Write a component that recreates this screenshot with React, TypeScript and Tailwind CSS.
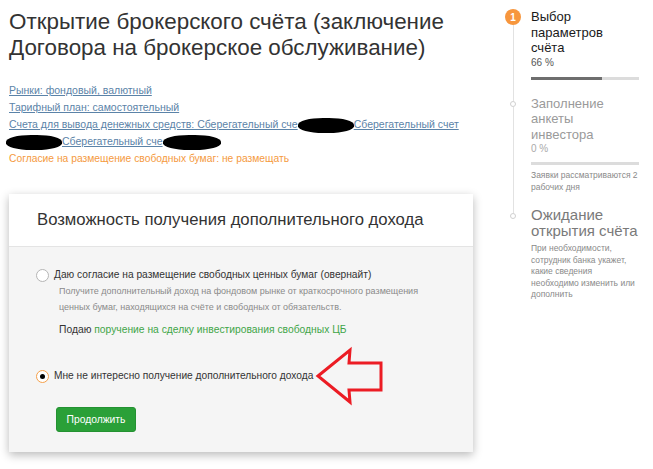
import type { ReactNode } from 'react';

function Blob({ w }: { w: number }) {
  return (
    <span
      className="inline-block align-middle h-[15px] rounded-[45%] bg-black"
      style={{ width: w }}
    />
  );
}

function Step({
  marker,
  children,
  lineAbove,
  last,
}: {
  marker: ReactNode;
  children: ReactNode;
  lineAbove: number;
  last?: boolean;
}) {
  return (
    <div className="flex">
      <div className="w-[34px] shrink-0 pl-[8px]">
        <div className="w-[16px] h-full flex flex-col items-center">
          {lineAbove > 0 && <div className="w-px bg-[#e2e2e2]" style={{ height: lineAbove }} />}
          {marker}
          {!last && <div className="w-px flex-1 bg-[#e2e2e2]" />}
        </div>
      </div>
      <div className="flex-1 pr-[14px]">{children}</div>
    </div>
  );
}

function SmallDot() {
  return <div className="w-[6px] h-[6px] rounded-full border border-[#d0d0d0] bg-white shrink-0" />;
}

export default function App() {
  return (
    <main className="relative w-[653px] h-[469px] bg-white overflow-hidden font-['Liberation_Sans',Arial,sans-serif] flex">
      <section className="w-[497px] shrink-0 pl-[9px] pt-[9px]">
        <h1 className="text-[22.4px] leading-[26px] text-[#333]">
          Открытие брокерского счёта (заключение Договора на брокерское обслуживание)
        </h1>

        <div className="mt-[21px] text-[10.5px] leading-[17px]">
          <div>
            <a className="text-[#5b83a8] underline">Рынки: фондовый, валютный</a>
          </div>
          <div>
            <a className="text-[#5b83a8] underline">Тарифный план: самостоятельный</a>
          </div>
          <div className="text-[#5b83a8] underline">
            Счета для вывода денежных средств: Сберегательный сче<Blob w={56} />Сберегательный счет
          </div>
          <div className="text-[#5b83a8] underline -ml-[3px]">
            <Blob w={56} />Сберегательный сче<Blob w={58} />
          </div>
          <div className="text-[#f59a3e] text-[10.3px]">Согласие на размещение свободных бумаг: не размещать</div>
        </div>

        <div className="mt-[27px] w-[464px] shadow-[0_3px_9px_rgba(0,0,0,0.28)]">
          <div className="bg-white h-[53px] px-[28px] flex items-center border-b border-[#e4e4e4]">
            <h2 className="text-[16.7px] text-[#333]">Возможность получения дополнительного дохода</h2>
          </div>
          <div className="bg-[#f5f5f5] pt-[20px] pb-[20px] pl-[27px]">
            <label className="flex items-center gap-[5px] text-[10.2px] leading-[16px] text-[#333]">
              <span className="w-[13px] h-[13px] rounded-full border border-[#b5b5b5] bg-white shrink-0" />
              Даю согласие на размещение свободных ценных бумаг (овернайт)
            </label>
            <div className="pl-[23px] text-[9px] leading-[16px] text-[#8a8a8a] whitespace-nowrap">
              Получите дополнительный доход на фондовом рынке от краткосрочного размещения
              <br />
              ценных бумаг, находящихся на счёте и свободных от обязательств.
            </div>
            <div className="pl-[23px] mt-[7px] text-[10.3px] leading-[16px] text-[#333]">
              Подаю <span className="text-[#3fa548]">поручение на сделку инвестирования свободных ЦБ</span>
            </div>
            <label className="mt-[30px] flex items-center gap-[5px] text-[10.2px] leading-[16px] text-[#333]">
              <span className="w-[13px] h-[13px] rounded-full border border-[#f5a04a] bg-white shrink-0 flex items-center justify-center">
                <span className="w-[5px] h-[5px] rounded-full bg-black" />
              </span>
              Мне не интересно получение дополнительного дохода
            </label>
            <button className="mt-[23px] ml-[20px] w-[80px] h-[25px] rounded-[3px] bg-[#2aa038] text-white text-[10.3px] border border-[#249232]">
              Продолжить
            </button>
          </div>
        </div>
      </section>

      <aside className="flex-1 pt-[9px]">
        <Step
          lineAbove={0}
          marker={
            <div className="w-[16px] h-[16px] rounded-full bg-[#f7963d] text-white text-[10px] font-bold flex items-center justify-center shrink-0">
              1
            </div>
          }
        >
          <div className="text-[13px] leading-[15.5px] text-[#1a1a1a]">Выбор параметров счёта</div>
          <div className="text-[10px] leading-[13px] text-[#555]">66 %</div>
          <div className="mt-[8px] h-[3px] bg-[#dcdcdc]">
            <div className="h-full bg-[#6e6e6e]" style={{ width: '66%' }} />
          </div>
          <div className="h-[16px]" />
        </Step>
        <Step lineAbove={5} marker={<SmallDot />}>
          <div className="text-[13px] leading-[15.5px] text-[#9a9a9a]">Заполнение анкеты инвестора</div>
          <div className="text-[10px] leading-[13px] text-[#aaa]">0 %</div>
          <div className="mt-[7px] h-[3px] bg-[#dcdcdc]" />
          <div className="mt-[5px] text-[8.5px] leading-[11.5px] text-[#8a8a8a]">
            Заявки рассматриваются 2 рабочих дня
          </div>
          <div className="h-[14px]" />
        </Step>
        <Step lineAbove={6} last marker={<SmallDot />}>
          <div className="text-[15px] leading-[16px] text-[#7a7a7a]">Ожидание открытия счёта</div>
          <div className="mt-[4px] text-[8.5px] leading-[11.5px] text-[#8a8a8a]">
            При необходимости, сотрудник банка укажет, какие сведения необходимо изменить или дополнить
          </div>
        </Step>
      </aside>

      <svg className="absolute left-[314px] top-[346px]" width="72" height="60" viewBox="0 0 72 60">
        <polygon
          points="4,30 36,4 35,17 67,17 67,44 35,44 36,56"
          fill="none"
          stroke="#ec1c24"
          strokeWidth="3"
          strokeLinejoin="miter"
        />
      </svg>
    </main>
  );
}
